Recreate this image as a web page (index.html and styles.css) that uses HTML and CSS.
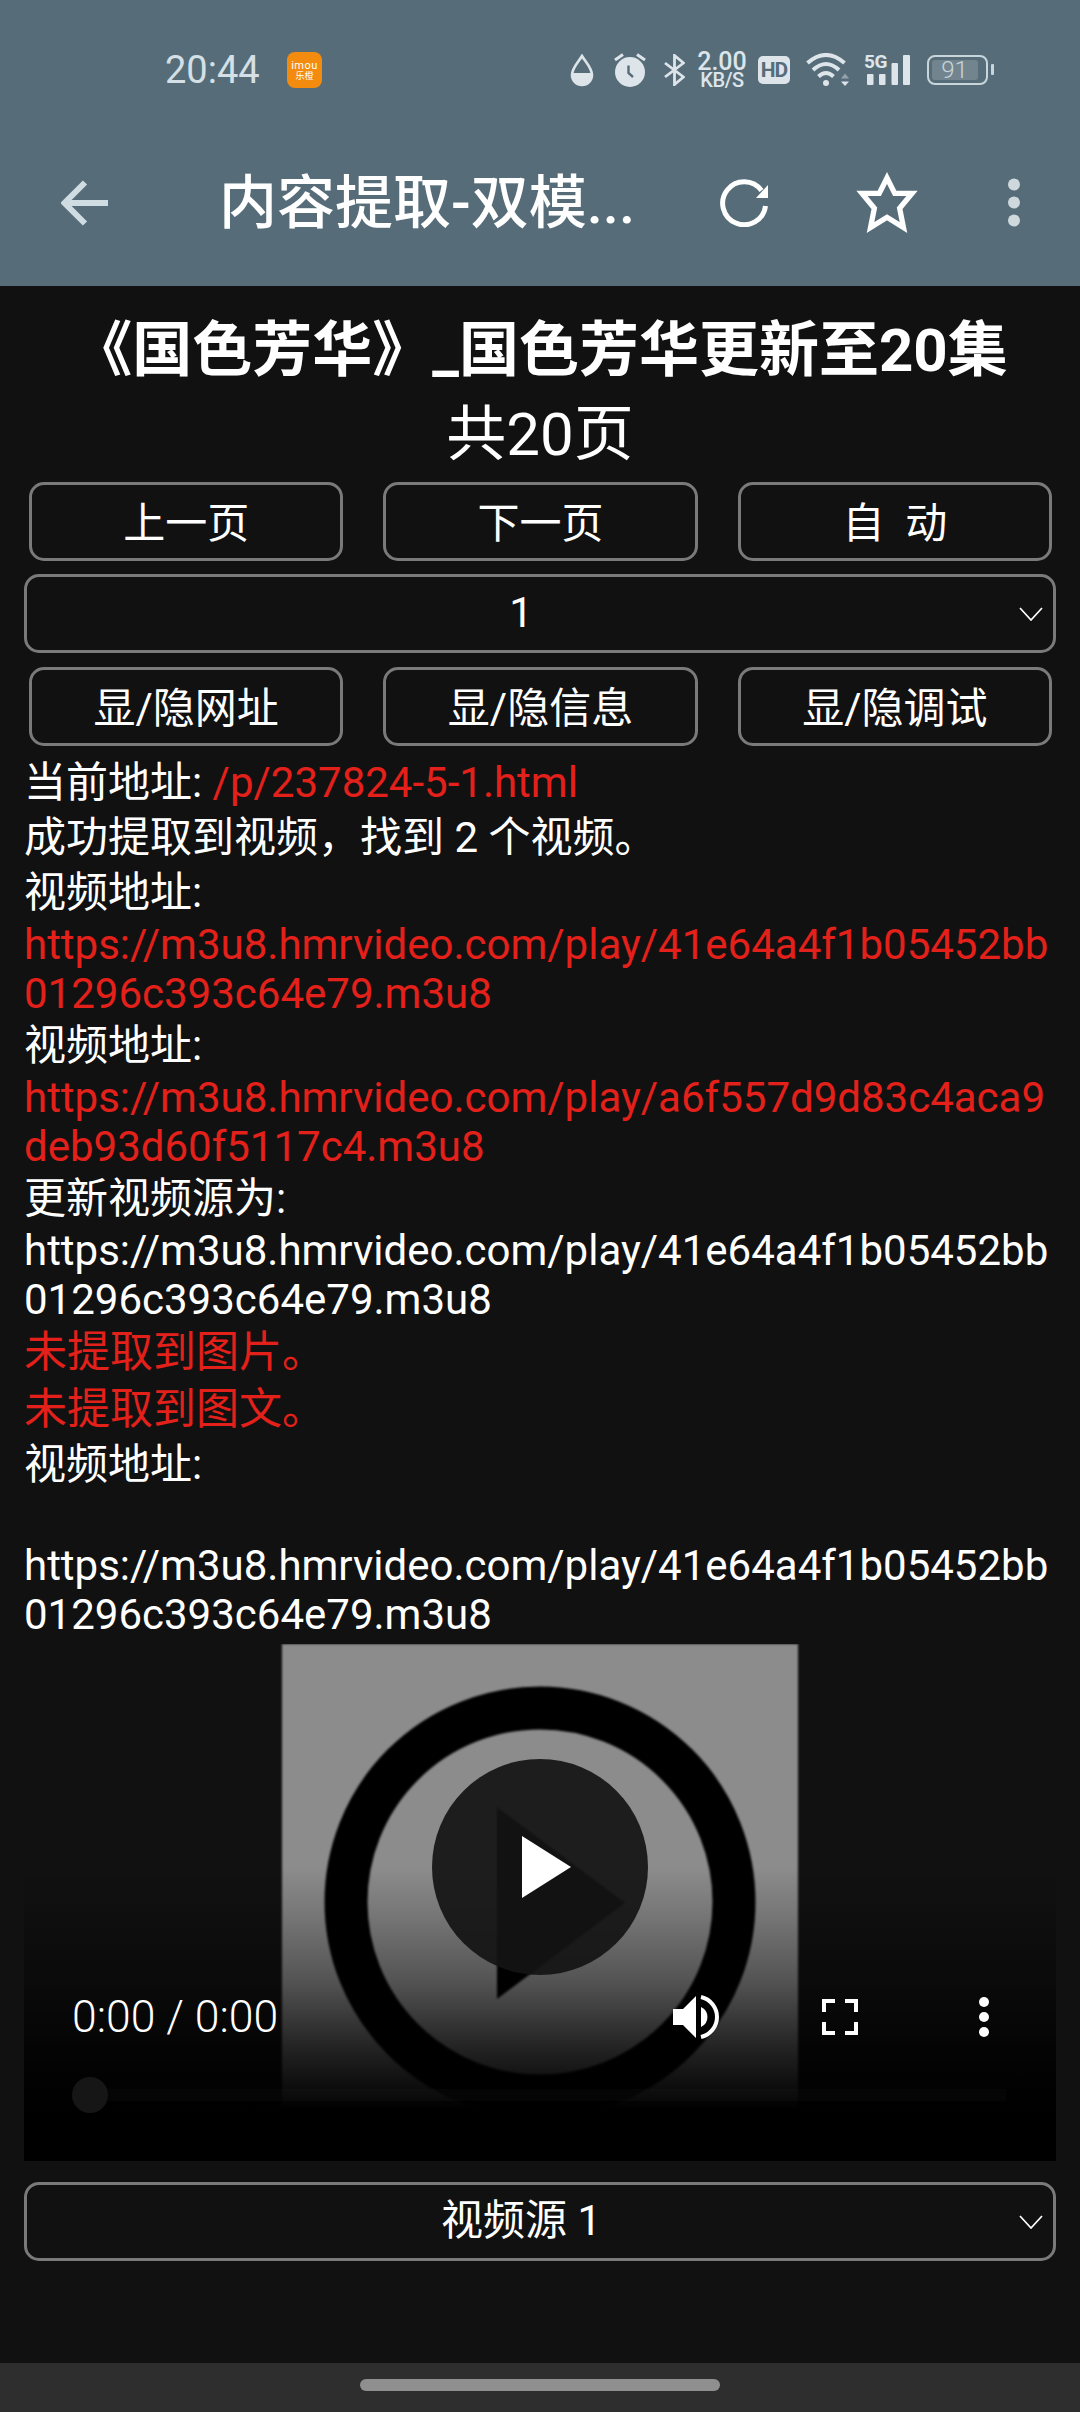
FILE: index.html
```html
<!DOCTYPE html>
<html lang="zh-CN">
<head>
<meta charset="utf-8">
<title>内容提取-双模式</title>
<link rel="stylesheet" href="styles.css">
</head>
<body>
<div class="page">
  <header class="appbar">
    <div class="statusbar">
      <span class="clock">20:44</span>
      <span class="imou"><span class="imou-en">imou</span><span class="imou-cn">乐橙</span></span>
      <div class="status-icons">
        <svg class="i-drop" viewBox="0 0 24 33"><path d="M12 2C8.500 8 2 14 2 21a10 10 0 0 0 20 0C22 14 15.500 8 12 2z" fill="none" stroke="#dde5ea" stroke-width="2.600"/><path d="M2 19h20v2a10 10 0 0 1-20 0z" fill="#dde5ea"/></svg>
        <svg class="i-alarm" viewBox="0 0 32 34"><path d="M1 7L9 1.500M31 7L23 1.500" stroke="#dde5ea" stroke-width="3" fill="none"/><circle cx="16" cy="19" r="15" fill="#dde5ea"/><path d="M14.500 12.500V20L19 24" stroke="#566d79" stroke-width="2.400" fill="none"/></svg>
        <svg class="i-bt" viewBox="0 0 21 32"><path d="M1 9L19.500 23L10.500 30.500V1.500L19.500 9L1 23" fill="none" stroke="#dde5ea" stroke-width="2.800"/></svg>
        <div class="speed"><span class="speed-num">2.00</span><span class="speed-unit">KB/S</span></div>
        <span class="hd">HD</span>
        <svg class="i-wifi" viewBox="0 0 44 34"><g fill="none" stroke="#dde5ea" stroke-width="4"><path d="M1.500 10Q20 -6 38.500 10"/><path d="M7 17Q20 5 33 17"/><path d="M12.500 23.500Q20 16.500 27.500 23.500"/></g><circle cx="20" cy="30" r="3" fill="#dde5ea"/><path d="M35 25.500L39 20.500L43 25.500z" fill="#dde5ea" opacity=".45"/><path d="M35 28.500H43L39 33z" fill="#dde5ea"/></svg>
        <div class="signal"><span class="net">5G</span><svg class="i-bars" viewBox="0 0 46 31"><rect x="3" y="20" width="6.500" height="11" rx="1" fill="#dde5ea"/><rect x="15" y="20" width="6.500" height="11" rx="1" fill="#dde5ea"/><rect x="27.500" y="9" width="6.500" height="22" rx="1" fill="#dde5ea"/><rect x="39" y="1" width="7" height="30" rx="1" fill="#dde5ea"/></svg></div>
        <div class="battery"><span class="battery-fill">91</span></div>
      </div>
    </div>
    <div class="toolbar">
      <svg class="i-back" viewBox="0 0 48 48"><path d="M47 24H4M24 3.500L3.500 24L24 44.500" fill="none" stroke="#cfdde3" stroke-width="6"/></svg>
      <div class="appbar-title">内容提取-双模...</div>
      <svg class="i-reload" viewBox="0 0 48 48"><path d="M41.500 11.500A21.500 21.500 0 1 0 45.500 27" fill="none" stroke="#fff" stroke-width="5"/><path d="M48 6V19H36z" fill="#fff"/></svg>
      <svg class="i-star" viewBox="0 0 64 64"><path d="M32 8.500L39.300 23H55.500L43.900 36.900L47.500 55L32 45.500L16.500 55L20.100 36.900L8.500 23H24.700z" fill="none" stroke="#fff" stroke-width="5"/></svg>
      <svg class="i-more" viewBox="0 0 14 50"><circle cx="7" cy="6.500" r="6" fill="#cfd8dc"/><circle cx="7" cy="24.500" r="6" fill="#cfd8dc"/><circle cx="7" cy="42.500" r="6" fill="#cfd8dc"/></svg>
    </div>
  </header>

  <main class="content">
    <h1 class="title">《国色芳华》_国色芳华更新至20集</h1>
    <div class="pages">共20页</div>

    <div class="btn-row">
      <button class="btn">上一页</button>
      <button class="btn">下一页</button>
      <button class="btn">自&nbsp;&nbsp;动</button>
    </div>
    <div class="select-wrap select-page">
      <select class="select"><option>1</option></select>
      <svg class="caret" viewBox="0 0 24 14"><path d="M1 1L12 13L23 1" fill="none" stroke="#fff" stroke-width="1.700"/></svg>
    </div>
    <div class="btn-row">
      <button class="btn">显/隐网址</button>
      <button class="btn">显/隐信息</button>
      <button class="btn">显/隐调试</button>
    </div>

    <div class="log">
      <div class="cjk">当前地址: <span class="red">/p/237824-5-1.html</span></div>
      <div class="cjk">成功提取到视频，找到 2 个视频。</div>
      <div class="cjk">视频地址:</div>
      <div class="url red">https://m3u8.hmrvideo.com/play/41e64a4f1b05452bb01296c393c64e79.m3u8</div>
      <div class="cjk">视频地址:</div>
      <div class="url red">https://m3u8.hmrvideo.com/play/a6f557d9d83c4aca9deb93d60f5117c4.m3u8</div>
      <div class="cjk">更新视频源为:</div>
      <div class="url">https://m3u8.hmrvideo.com/play/41e64a4f1b05452bb01296c393c64e79.m3u8</div>
      <div class="note red">未提取到图片。</div>
      <div class="note red">未提取到图文。</div>
      <div class="cjk">视频地址:</div>
      <div class="url url-gap">https://m3u8.hmrvideo.com/play/41e64a4f1b05452bb01296c393c64e79.m3u8</div>
    </div>

    <div class="player">
      <svg class="poster" viewBox="0 0 516 516">
        <rect width="516" height="516" fill="#8c8c8c"/>
        <circle cx="258" cy="258" r="194" fill="none" stroke="#000" stroke-width="43"/>
        <path d="M215 163L343 259L215 355z" fill="#000"/>
      </svg>
      <div class="shade"></div>
      <div class="play"><svg class="i-play" viewBox="0 0 49 62"><path d="M0 0L49 31L0 62z" fill="#fff"/></svg></div>
      <div class="controls">
        <div class="controls-row">
          <span class="time">0:00 / 0:00</span>
          <svg class="i-volume" viewBox="0 0 46 44"><path d="M0 14H10L23 1V43L10 30H0z" fill="#fff"/><path d="M28 12a11 11 0 0 1 0 20z" fill="#fff"/><path d="M28 2a20.500 20.500 0 0 1 0 40" fill="none" stroke="#fff" stroke-width="4"/></svg>
          <svg class="i-full" viewBox="0 0 36 36"><path d="M13 2H2V13M23 2H34V13M13 34H2V23M23 34H34V23" fill="none" stroke="#fff" stroke-width="4"/></svg>
          <svg class="i-vmore" viewBox="0 0 10 40"><circle cx="5" cy="5" r="5" fill="#fff"/><circle cx="5" cy="20" r="5" fill="#fff"/><circle cx="5" cy="35" r="5" fill="#fff"/></svg>
        </div>
        <div class="scrub"><span class="scrub-thumb"></span><span class="scrub-track"></span></div>
      </div>
    </div>

    <div class="select-wrap select-source">
      <select class="select"><option>视频源 1</option></select>
      <svg class="caret" viewBox="0 0 24 14"><path d="M1 1L12 13L23 1" fill="none" stroke="#fff" stroke-width="1.700"/></svg>
    </div>
  </main>

  <footer class="navbar"><span class="pill"></span></footer>
</div>
</body>
</html>
```
FILE: styles.css
```css
* { box-sizing: border-box; }
html, body { margin: 0; padding: 0; height: 2412px; overflow: hidden; background: #111; }
body { font-family: Roboto, "Noto Sans CJK SC", sans-serif; color: #fff; }
.page { display: flex; flex-direction: column; height: 2412px; }
svg { display: block; flex: none; }

/* app bar */
.appbar { background: #566d79; height: 286px; flex: none; }
.statusbar { height: 120px; padding: 20px 0 0 165px; display: flex; align-items: center; }
.clock { font-size: 38px; line-height: 100px; color: #d5e0e6; width: 122px; }
.imou { width: 35px; height: 36px; border-radius: 8px; background: #f38b0e; display: flex; flex-direction: column; align-items: center; justify-content: center; }
.imou-en { font-size: 11px; line-height: 11px; letter-spacing: .5px; }
.imou-cn { font-size: 9px; line-height: 10px; }
.status-icons { margin-left: 248px; display: flex; align-items: center; height: 100px; }
.i-drop { width: 24px; height: 33px; }
.i-alarm { width: 32px; height: 34px; margin-left: 20px; }
.i-bt { width: 21px; height: 32px; margin-left: 18px; }
.speed { margin-left: 12px; width: 50px; display: flex; flex-direction: column; align-items: center; color: #dde5ea; font-weight: 500; }
.speed-num { font-size: 25px; line-height: 20px; }
.speed-unit { font-size: 20px; line-height: 17px; letter-spacing: -.4px; }
.hd { margin-left: 11px; width: 32px; height: 28px; border-radius: 5px; background: #dde5ea; color: #566d79; font-size: 21px; font-weight: 700; letter-spacing: -1px; line-height: 28px; text-align: center; }
.i-wifi { width: 44px; height: 34px; margin-left: 16px; }
.signal { position: relative; margin-left: 14px; width: 46px; height: 32px; }
.net { position: absolute; left: 0; top: -2px; font-size: 19px; line-height: 19px; font-weight: 700; letter-spacing: -.5px; color: #dde5ea; }
.i-bars { width: 46px; height: 31px; }
.battery { position: relative; margin-left: 17px; width: 61px; height: 30px; border: 2.5px solid #c8d5db; border-radius: 8px; padding: 2.5px; }
.battery::after { content: ""; position: absolute; right: -8px; top: 7px; width: 3px; height: 11px; border-radius: 1px; background: #c8d5db; }
.battery-fill { display: block; width: 46px; height: 20px; border-radius: 3px; background: rgba(255,255,255,.17); color: #c8d5db; font-size: 24px; font-weight: 300; line-height: 20px; text-align: center; }

.toolbar { height: 166px; display: flex; align-items: center; padding-left: 61px; }
.i-back { width: 48px; height: 48px; }
.appbar-title { margin-left: 110px; width: 422px; font-size: 58px; font-weight: 500; white-space: nowrap; line-height: 70px; }
.i-reload { width: 48px; height: 48px; margin-left: 79px; }
.i-star { width: 68px; height: 68px; margin-left: 85px; }
.i-more { width: 14px; height: 50px; margin-left: 86px; }

/* content */
.content { flex: 1; padding: 0 24px; }
.title { margin: 30px 0 0; font-size: 60px; font-weight: 700; line-height: 70px; text-align: center; white-space: nowrap; }
.pages { margin-top: 16px; font-size: 60px; line-height: 66px; text-align: center; }
.btn-row { display: grid; grid-template-columns: repeat(3, 1fr); gap: 40px; padding: 0 4px 0 5px; margin-top: 14px; }
.btn { height: 79px; padding: 0 0 4px; background: #111; color: #fff; border: 3px solid #7a7a7a; border-radius: 15px; font: inherit; font-size: 42px; }
.select-wrap { position: relative; }
.select-page { margin-top: 13px; }
.select-source { margin-top: 21px; }
.select { display: block; width: 100%; height: 79px; padding: 0 38px 2px 0; appearance: none; -webkit-appearance: none; background: #111; color: #fff; border: 3px solid #7a7a7a; border-radius: 15px; font: inherit; font-size: 42px; text-align: center; text-align-last: center; }
.caret { position: absolute; right: 13px; top: 33px; width: 24px; height: 14px; }

.log { margin-top: 9px; font-size: 42px; }
.cjk { line-height: 55px; }
.note { font-size: 43px; line-height: 56.5px; }
.url { line-height: 49px; word-break: break-all; }
.url-gap { margin-top: 49px; }
.red { color: #e3201a; }

/* video */
.player { position: relative; margin-top: 5px; height: 517px; display: flex; justify-content: center; overflow: hidden; }
.poster { width: 516px; height: 516px; filter: blur(.8px); }
.shade { position: absolute; inset: 0; background: linear-gradient(to bottom, rgba(0,0,0,0) 43%, rgba(0,0,0,.15) 52%, rgba(0,0,0,.4) 65%, rgba(0,0,0,.75) 78%, #000 90%); }
.play { position: absolute; left: 408px; top: 115px; width: 216px; height: 216px; border-radius: 50%; background: rgba(20,20,20,.92); display: flex; align-items: center; justify-content: center; }
.i-play { width: 49px; height: 62px; margin-left: 13px; }
.controls { position: absolute; left: 48px; right: 50px; top: 351px; }
.controls-row { display: flex; align-items: center; height: 44px; }
.time { font-size: 44.5px; line-height: 44px; font-weight: 300; width: 601px; color: #fff; white-space: nowrap; }
.i-volume { width: 46px; height: 44px; }
.i-full { width: 36px; height: 36px; margin-left: 103px; }
.i-vmore { width: 10px; height: 40px; margin-left: 121px; }
.scrub { position: relative; margin-top: 38px; height: 36px; display: flex; align-items: center; }
.scrub-thumb { flex: none; width: 36px; height: 36px; border-radius: 50%; background: #161616; }
.scrub-track { flex: 1; height: 12px; background: rgba(255,255,255,.02); }

/* nav */
.navbar { flex: none; height: 49px; background: #2e2e2e; display: flex; justify-content: center; padding-top: 16px; }
.pill { width: 360px; height: 12px; border-radius: 6px; background: #8f8f8f; }
```
